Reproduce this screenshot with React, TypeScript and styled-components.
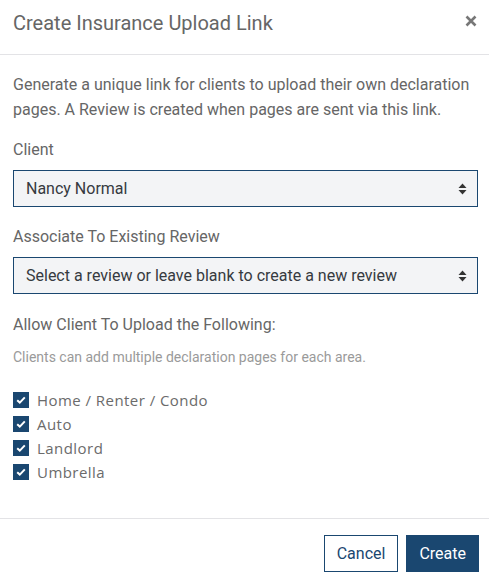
import styled, { createGlobalStyle } from "styled-components";

const navy = "#1a4770";

const GlobalStyle = createGlobalStyle`
  html, body {
    margin: 0;
    padding: 0;
    background: #ffffff;
    font-family: Roboto, "Liberation Sans", sans-serif;
  }
  * { box-sizing: border-box; }
`;

const Dialog = styled.div`
  width: 489px;
  height: 587px;
  display: flex;
  flex-direction: column;
  background: #fff;
`;

const Header = styled.div`
  height: 55px;
  flex: none;
  display: flex;
  align-items: center;
  justify-content: space-between;
  padding: 0 11px 0 13px;
  border-bottom: 1px solid #e3e3e6;
`;

const Title = styled.h4`
  margin: 0;
  margin-top: -9px;
  font-size: 20px;
  font-weight: 400;
  color: #666;
`;

const Close = styled.button`
  border: 0;
  background: none;
  padding: 0;
  margin-top: -13px;
  width: 14px;
  height: 14px;
  display: flex;
  align-items: center;
  justify-content: center;
  cursor: pointer;
`;

const Body = styled.div`
  flex: 1;
  padding: 17px 11px 0 13px;
  display: flex;
  flex-direction: column;
`;

const Intro = styled.p`
  margin: 0;
  font-size: 16px;
  line-height: 25px;
  color: #666;
`;

const Label = styled.label<{ $top: number }>`
  display: block;
  margin-top: ${(p) => p.$top}px;
  font-size: 16px;
  line-height: 24px;
  color: #666;
`;

const SelectWrap = styled.div`
  position: relative;
  margin-top: 8px;
`;

const Select = styled.select`
  width: 100%;
  height: 37px;
  appearance: none;
  -webkit-appearance: none;
  background: #f3f4f6;
  border: 1px solid ${navy};
  border-radius: 0;
  padding: 0 12px;
  font-family: Roboto, "Liberation Sans", sans-serif;
  font-size: 16px;
  color: #363a40;
  outline: none;
`;

const Caret = styled.svg`
  position: absolute;
  right: 11px;
  top: 50%;
  transform: translateY(-50%);
  pointer-events: none;
`;

const Hint = styled.div`
  margin-top: 10px;
  font-size: 14px;
  line-height: 20px;
  color: #9a9a9a;
`;

const Checks = styled.div`
  margin-top: 21px;
  display: flex;
  flex-direction: column;
`;

const CheckRow = styled.label`
  display: flex;
  align-items: center;
  height: 24px;
  gap: 8px;
  font-family: "Open Sans", "DejaVu Sans", sans-serif;
  font-size: 15px;
  letter-spacing: 0.45px;
  color: #6b6b6b;
`;

const Box = styled.span`
  width: 16px;
  height: 16px;
  background: ${navy};
  display: flex;
  align-items: center;
  justify-content: center;
  flex: none;
`;

const Footer = styled.div`
  flex: none;
  border-top: 1px solid #e3e3e6;
  padding: 16px 10px 15px 13px;
  display: flex;
  justify-content: flex-end;
  gap: 8px;
`;

const Button = styled.button<{ $primary?: boolean }>`
  height: 37px;
  padding: 0 12px;
  border: 1px solid ${navy};
  border-radius: 0;
  background: ${(p) => (p.$primary ? navy : "#fff")};
  color: ${(p) => (p.$primary ? "#fff" : navy)};
  font-family: Roboto, "Liberation Sans", sans-serif;
  font-size: 16px;
  cursor: pointer;
`;

const CaretIcon = () => (
  <Caret width="9" height="12" viewBox="0 0 9 12">
    <path d="M4.5 0.5 L8.5 5 H0.5 Z" fill="#333" />
    <path d="M4.5 11.5 L8.5 7 H0.5 Z" fill="#333" />
  </Caret>
);

const items = ["Home / Renter / Condo", "Auto", "Landlord", "Umbrella"];

export default function App() {
  return (
    <>
      <GlobalStyle />
      <Dialog>
        <Header>
          <Title>Create Insurance Upload Link</Title>
          <Close aria-label="Close">
            <svg width="12" height="12" viewBox="0 0 12 12">
              <path d="M1.5 1.5 L10.5 10.5 M10.5 1.5 L1.5 10.5" stroke="#777" strokeWidth="2.6" />
            </svg>
          </Close>
        </Header>
        <Body>
          <Intro>
            Generate a unique link for clients to upload their own declaration pages. A Review is
            created when pages are sent via this link.
          </Intro>
          <Label $top={16}>Client</Label>
          <SelectWrap>
            <Select defaultValue="nancy">
              <option value="nancy">Nancy Normal</option>
            </Select>
            <CaretIcon />
          </SelectWrap>
          <Label $top={18}>Associate To Existing Review</Label>
          <SelectWrap>
            <Select defaultValue="">
              <option value="">Select a review or leave blank to create a new review</option>
            </Select>
            <CaretIcon />
          </SelectWrap>
          <Label $top={19}>Allow Client To Upload the Following:</Label>
          <Hint>Clients can add multiple declaration pages for each area.</Hint>
          <Checks>
            {items.map((it) => (
              <CheckRow key={it}>
                <Box>
                  <svg width="10" height="8" viewBox="0 0 10 8">
                    <path d="M1.2 4.2 L3.8 6.6 L8.8 1.4" stroke="#fff" strokeWidth="2" fill="none" />
                  </svg>
                </Box>
                {it}
              </CheckRow>
            ))}
          </Checks>
        </Body>
        <Footer>
          <Button>Cancel</Button>
          <Button $primary>Create</Button>
        </Footer>
      </Dialog>
    </>
  );
}
